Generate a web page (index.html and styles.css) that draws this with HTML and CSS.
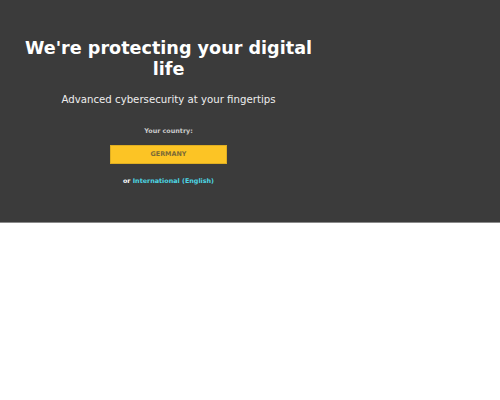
FILE: index.html
```html
<!DOCTYPE html>
<html lang="en">
<head>
    <meta charset="UTF-8">
    <meta name="viewport" content="width=device-width, initial-scale=1.0">
    <title>Protecting your digital life</title>
    <link rel="stylesheet" href="styles.css">
</head>
<body>
    <div class="hero">
        <div class="container">
            <h1>We're protecting your digital life</h1>
            <p class="subtitle">Advanced cybersecurity at your fingertips</p>
            <p class="country-label">Your country:</p>
            <a class="country-button" href="#">GERMANY</a>
            <p class="alt">or <a href="#">International (English)</a></p>
        </div>
    </div>
</body>
</html>
```

FILE: styles.css
```css
body {
    font-family: "DejaVu Sans", sans-serif;
    margin: 0;
    background: #fff;
}
.hero {
    background-color: #3b3b3b;
    border-bottom: 1px solid #8a8a8a;
    height: 222px;
}
.container {
    width: 337px;
    padding-top: 38px;
    text-align: center;
    display: flex;
    flex-direction: column;
    align-items: center;
}
h1 {
    margin: 0;
    padding: 0 20px;
    color: #fff;
    font-size: 17.6px;
    line-height: 21px;
    font-weight: bold;
}
.subtitle {
    margin: 14px 0 0;
    color: #eee;
    font-size: 10.2px;
}
.country-label {
    margin: 22px 0 0;
    color: #ccc;
    font-size: 6.4px;
    font-weight: bold;
}
.country-button {
    margin-top: 10px;
    display: block;
    width: 115px;
    height: 17px;
    line-height: 17px;
    background-color: #fcc425;
    border: 1px solid #dfae22;
    color: #7b6a36;
    font-size: 6.4px;
    font-weight: bold;
    text-decoration: none;
}
.alt {
    margin: 13px 0 0;
    color: #fff;
    font-size: 6.4px;
    font-weight: bold;
}
.alt a {
    color: #4dd7e4;
    text-decoration: none;
}
```
